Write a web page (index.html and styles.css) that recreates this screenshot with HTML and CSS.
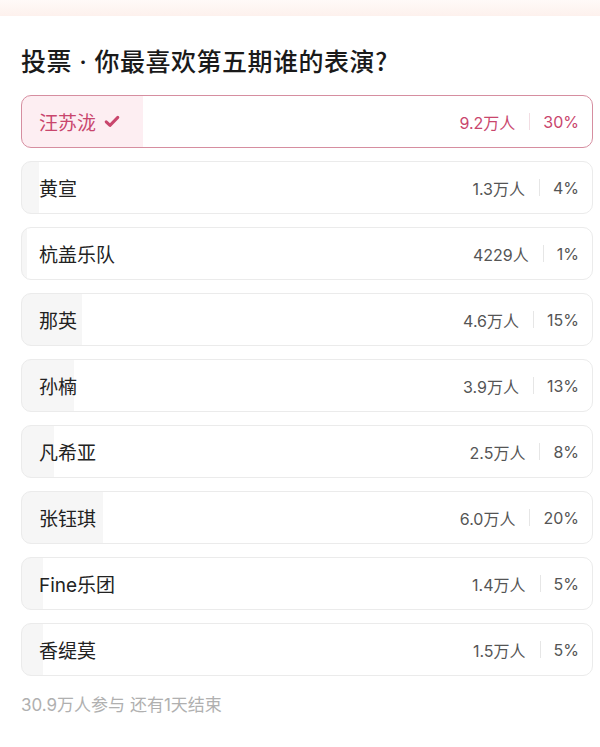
FILE: index.html
```html
<!DOCTYPE html>
<html lang="zh">
<head>
<meta charset="utf-8">
<link rel="stylesheet" href="styles.css">
</head>
<body>
<div class="band"></div>
<main class="card">
  <h1 class="title">投票<span class="dot"> · </span>你最喜欢第五期谁的表演?</h1>
  <ul class="options">
    <li class="opt selected" style="--w:121px">
      <span class="name">汪苏泷<svg class="check" viewBox="0 0 16 13" width="16" height="13"><path d="M2.2 6.8 L6 10.4 L13.8 2.4" fill="none" stroke="#c9466d" stroke-width="3" stroke-linecap="round" stroke-linejoin="round"/></svg></span>
      <span class="stats"><span class="count">9.2万人</span><span class="sep"></span><span class="pct">30%</span></span>
    </li>
    <li class="opt" style="--w:17px">
      <span class="name">黄宣</span>
      <span class="stats"><span class="count">1.3万人</span><span class="sep"></span><span class="pct">4%</span></span>
    </li>
    <li class="opt" style="--w:5px">
      <span class="name">杭盖乐队</span>
      <span class="stats"><span class="count">4229人</span><span class="sep"></span><span class="pct">1%</span></span>
    </li>
    <li class="opt" style="--w:60px">
      <span class="name">那英</span>
      <span class="stats"><span class="count">4.6万人</span><span class="sep"></span><span class="pct">15%</span></span>
    </li>
    <li class="opt" style="--w:52px">
      <span class="name">孙楠</span>
      <span class="stats"><span class="count">3.9万人</span><span class="sep"></span><span class="pct">13%</span></span>
    </li>
    <li class="opt" style="--w:32px">
      <span class="name">凡希亚</span>
      <span class="stats"><span class="count">2.5万人</span><span class="sep"></span><span class="pct">8%</span></span>
    </li>
    <li class="opt" style="--w:81px">
      <span class="name">张钰琪</span>
      <span class="stats"><span class="count">6.0万人</span><span class="sep"></span><span class="pct">20%</span></span>
    </li>
    <li class="opt" style="--w:21px">
      <span class="name">Fine乐团</span>
      <span class="stats"><span class="count">1.4万人</span><span class="sep"></span><span class="pct">5%</span></span>
    </li>
    <li class="opt" style="--w:21px">
      <span class="name">香缇莫</span>
      <span class="stats"><span class="count">1.5万人</span><span class="sep"></span><span class="pct">5%</span></span>
    </li>
  </ul>
  <p class="footer">30.9万人参与 还有1天结束</p>
</main>
</body>
</html>
```

FILE: styles.css
```css
* { box-sizing: border-box; }
html, body {
  margin: 0;
  padding: 0;
  background: #ffffff;
  font-family: Inter, "Noto Sans CJK SC", sans-serif;
}
.band {
  height: 16px;
  background: linear-gradient(to bottom, #fffaf8 0%, #fdf1ed 100%);
}
.card {
  padding: 0 7px 0 21px;
}
.title {
  margin: 28px 0 0 0;
  height: 32px;
  font-family: "Noto Sans CJK SC", sans-serif;
  font-size: 25px;
  line-height: 32px;
  font-weight: 500;
  letter-spacing: 0.5px;
  color: #1a1a1a;
}
.title .dot {
  font-family: Inter, sans-serif;
  font-weight: 500;
  line-height: 0;
}
.options {
  list-style: none;
  margin: 19px 0 0 0;
  padding: 0;
  display: flex;
  flex-direction: column;
  gap: 13px;
}
.opt {
  height: 53px;
  border: 1px solid #ebebeb;
  border-radius: 10px;
  display: flex;
  align-items: center;
  justify-content: space-between;
  padding: 0 13px 0 17px;
  background: linear-gradient(to right, #f6f6f6 0, #f6f6f6 var(--w), #ffffff var(--w));
}
.opt.selected {
  border-color: #d68ea0;
  background: linear-gradient(to right, #fdeef2 0, #fdeef2 var(--w), #ffffff var(--w));
}
.name {
  font-size: 19px;
  color: #222222;
  display: flex;
  align-items: center;
  gap: 8px;
}
.selected .name { color: #c9466d; }
.check { display: block; }
.stats {
  display: flex;
  align-items: center;
  font-size: 16px;
  color: #555555;
}
.selected .stats { color: #c9466d; }
.sep {
  width: 1px;
  height: 17px;
  background: #e6e6e6;
  margin: 0 13px 0 14px;
}
.selected .sep { background: #f2dde3; }
.footer {
  margin: 17px 0 0 0;
  font-size: 17px;
  line-height: 24px;
  color: #b0b0b0;
}
```
